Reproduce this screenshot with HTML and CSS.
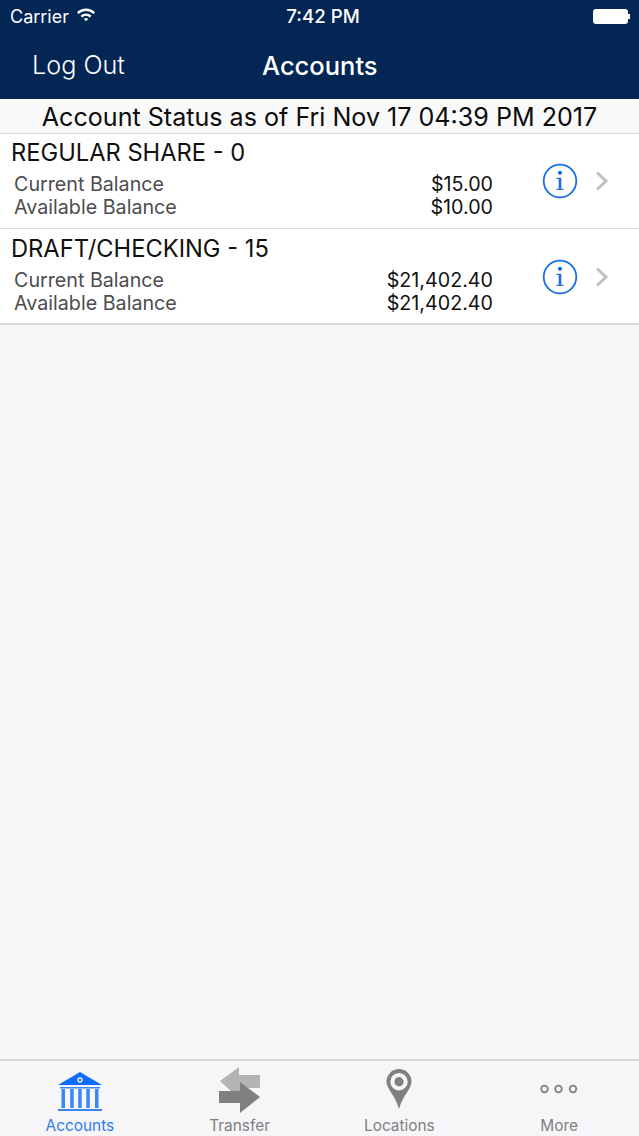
FILE: index.html
```html
<!DOCTYPE html>
<html lang="en">
<head>
  <meta charset="UTF-8">
  <meta name="viewport" content="width=device-width, initial-scale=1.0">
  <title>Accounts</title>
  <link rel="stylesheet" href="styles.css">
</head>
<body>

  <div class="app">
    <header class="top">
      <div class="statusbar">
        <div class="carrier">
          <span>Carrier</span>
          <svg class="wifi" width="20" height="15" viewBox="0 0 20 15">
            <path d="M1 5.2a13 13 0 0 1 18 0l-1.6 1.7a10.700 10.700 0 0 0-14.800 0z" fill="#fff"/>
            <path d="M4.500 8.700a8.200 8.200 0 0 1 11 0l-1.700 1.700a5.800 5.800 0 0 0-7.600 0z" fill="#fff"/>
            <path d="M7.800 11.900a3.300 3.300 0 0 1 4.400 0L10 14.200z" fill="#fff"/>
          </svg>
        </div>
        <div class="clock">7:42 PM</div>
        <div class="battery"><span class="battery-body"></span><span class="battery-tip"></span></div>
      </div>
      <nav class="navbar">
        <a class="logout">Log Out</a>
        <h1 class="title">Accounts</h1>
      </nav>
    </header>

    <div class="as-of">Account Status as of Fri Nov 17 04:39 PM 2017</div>

    <main class="accounts">
      <div class="account">
        <div class="account-info">
          <h2 class="account-name">REGULAR SHARE - 0</h2>
          <div class="balance"><span class="label">Current Balance</span><span class="amount">$15.00</span></div>
          <div class="balance"><span class="label">Available Balance</span><span class="amount">$10.00</span></div>
        </div>
        <svg class="info" width="36" height="36" viewBox="0 0 36 36">
          <circle cx="18" cy="18" r="16.300" fill="none" stroke="#1a6fe0" stroke-width="1.800"/>
          <circle cx="18" cy="9.800" r="2.100" fill="#1a6fe0"/>
          <path d="M14.700 14.700h4.600v11h2.200v1.300h-7v-1.300h2.200v-9.700h-2z" fill="#1a6fe0"/>
        </svg>
        <svg class="chevron" width="14" height="20" viewBox="0 0 14 20">
          <path d="M2 1.500l9 8.500-9 8.500" fill="none" stroke="#c0c0c2" stroke-width="3"/>
        </svg>
      </div>
      <div class="account">
        <div class="account-info">
          <h2 class="account-name">DRAFT/CHECKING - 15</h2>
          <div class="balance"><span class="label">Current Balance</span><span class="amount">$21,402.40</span></div>
          <div class="balance"><span class="label">Available Balance</span><span class="amount">$21,402.40</span></div>
        </div>
        <svg class="info" width="36" height="36" viewBox="0 0 36 36">
          <circle cx="18" cy="18" r="16.300" fill="none" stroke="#1a6fe0" stroke-width="1.800"/>
          <circle cx="18" cy="9.800" r="2.100" fill="#1a6fe0"/>
          <path d="M14.700 14.700h4.600v11h2.200v1.300h-7v-1.300h2.200v-9.700h-2z" fill="#1a6fe0"/>
        </svg>
        <svg class="chevron" width="14" height="20" viewBox="0 0 14 20">
          <path d="M2 1.500l9 8.500-9 8.500" fill="none" stroke="#c0c0c2" stroke-width="3"/>
        </svg>
      </div>
    </main>

    <footer class="tabbar">
      <div class="tab active">
        <svg width="46" height="44" viewBox="0 0 46 44">
          <path d="M23 2L45 15H1z" fill="#0f6bfa"/>
          <circle cx="23" cy="10" r="2" fill="none" stroke="#f6f5f8" stroke-width="1.300"/>
          <g fill="#3b86f5">
            <rect x="3" y="17" width="40" height="1.500"/>
            <rect x="4.500" y="19" width="3.500" height="19"/>
            <rect x="13.200" y="19" width="3.500" height="19"/>
            <rect x="21.200" y="19" width="3.500" height="19"/>
            <rect x="29.300" y="19" width="3.500" height="19"/>
            <rect x="38" y="19" width="3.500" height="19"/>
            <rect x="1" y="39" width="44" height="2"/>
          </g>
        </svg>
        <span>Accounts</span>
      </div>
      <div class="tab">
        <svg width="46" height="48" viewBox="0 0 46 48">
          <path d="M3 15L22 1v8h21v13H23v3h-9z" fill="#b4b4b6"/>
          <path d="M2 25h21v-9l20 15-20 16V37H2z" fill="#808083"/>
        </svg>
        <span>Transfer</span>
      </div>
      <div class="tab">
        <svg width="26" height="46" viewBox="0 0 26 46">
          <path fill-rule="evenodd" d="M13 1a12.500 12.500 0 0 1 12.500 12.500C25.500 21 17 27 13 41 9 27 .5 21 .5 13.500A12.500 12.500 0 0 1 13 1zm0 4a8.700 8.700 0 1 0 0 17.400A8.700 8.700 0 0 0 13 5z" fill="#808083"/>
          <circle cx="13" cy="13.700" r="4.600" fill="#808083"/>
        </svg>
        <span>Locations</span>
      </div>
      <div class="tab">
        <svg width="38" height="44" viewBox="0 0 38 44">
          <g fill="none" stroke="#808083" stroke-width="1.800">
            <circle cx="4.500" cy="19" r="3.300"/>
            <circle cx="18.500" cy="19" r="3.300"/>
            <circle cx="33" cy="19" r="3.300"/>
          </g>
        </svg>
        <span>More</span>
      </div>
    </footer>
  </div>

</body>
</html>
```

FILE: styles.css
```css
* {
  box-sizing: border-box;
  margin: 0;
  padding: 0;
}

html, body {
  height: 100%;
}

body {
  font-family: Inter, "Liberation Sans", sans-serif;
  background-color: #f6f5f7;
  color: #111;
}

.app {
  display: flex;
  flex-direction: column;
  height: 1136px;
}

.top {
  height: 99px;
  background: #042654;
  color: #fff;
}

.statusbar {
  display: grid;
  grid-template-columns: 1fr auto 1fr;
  align-items: center;
  height: 32px;
  padding: 0 9px 0 10px;
  font-size: 18px;
}

.carrier {
  display: flex;
  align-items: center;
  gap: 7px;
}

.wifi {
  margin-top: -3px;
}

.clock {
  margin-left: 6px;
  font-size: 18.700px;
  font-weight: 500;
}

.battery {
  display: flex;
  align-items: center;
  justify-content: flex-end;
}

.battery-body {
  width: 35px;
  height: 15px;
  background: #fff;
  border-radius: 3px;
}

.battery-tip {
  width: 2px;
  height: 5px;
  background: #fff;
}

.navbar {
  display: flex;
  align-items: center;
  height: 66px;
  padding: 0 0 0 32px;
}

.logout {
  width: 230px;
  font-size: 25.200px;
  font-weight: 300;
}

.title {
  font-size: 25.500px;
  font-weight: 500;
}

.as-of {
  height: 34px;
  line-height: 36px;
  text-align: center;
  font-size: 25.100px;
  background: #f9f9fa;
  color: #0c0c0c;
  white-space: nowrap;
}

.accounts {
  flex: 1;
}

.account {
  display: flex;
  align-items: flex-start;
  height: 95px;
  padding: 0 0 0 11px;
  background: #fff;
  border-top: 1px solid #dcdbdf;
}

.account:last-child {
  border-bottom: 2px solid #dcdbdf;
  height: 97px;
  padding-top: 1px;
}

.account-info {
  width: 482px;
  flex-shrink: 0;
}

.account-name {
  font-size: 23.700px;
  font-weight: 400;
  line-height: 28px;
  margin: 5px 0 6px;
}

.balance {
  display: flex;
  justify-content: space-between;
  padding-left: 3px;
  font-size: 19.700px;
  line-height: 23px;
}

.label {
  color: #4c4c4e;
}

.amount {
  color: #111;
}

.info {
  margin: 29px 0 0 49px;
}

.chevron {
  margin: 37px 0 0 17px;
}

.tabbar {
  display: grid;
  grid-template-columns: repeat(4, 1fr);
  height: 77px;
  border-top: 2px solid #d8d7da;
  background: #f6f5f7;
}

.tab {
  display: flex;
  flex-direction: column;
  align-items: center;
  justify-content: flex-end;
  padding-bottom: 1px;
  font-size: 15.400px;
  line-height: 18px;
  color: #808083;
}

.tab svg {
  margin-bottom: 3px;
}

.tab.active {
  color: #2f7cf0;
}
```
